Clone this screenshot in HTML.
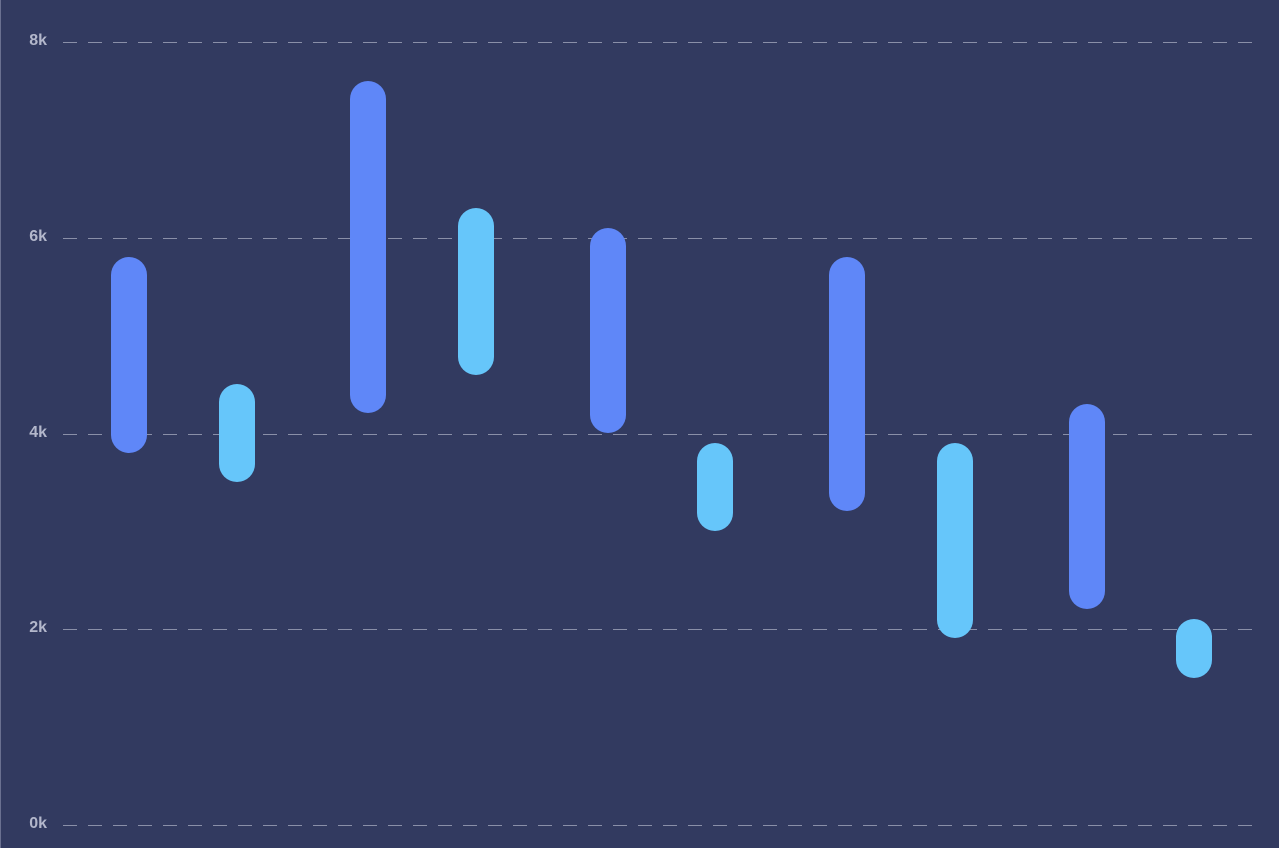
<!DOCTYPE html>
<html><head><style>
html,body{margin:0;padding:0;}
body{width:1279px;height:848px;background:#323a60;position:relative;overflow:hidden;font-family:"Liberation Sans",sans-serif;}
.lb{position:absolute;left:0;top:0;width:1px;height:848px;background:#6a7090;}
.t{position:absolute;right:1232px;color:#b3b7cb;font-size:16px;font-weight:bold;line-height:16px;}
.g{position:absolute;left:63px;width:1192px;height:1px;background:repeating-linear-gradient(90deg,#8a8fa8 0 14px,transparent 14px 25px);}
.b{position:absolute;width:36px;border-radius:18px;}
.d{background:#5f87f8}.l{background:#66c6fa}
</style></head><body>
<div class="lb"></div>
<div class="t" style="top:33px">8k</div><div class="g" style="top:42px"></div>
<div class="t" style="top:229px">6k</div><div class="g" style="top:238px"></div>
<div class="t" style="top:425px">4k</div><div class="g" style="top:434px"></div>
<div class="t" style="top:620px">2k</div><div class="g" style="top:629px"></div>
<div class="t" style="top:816px">0k</div><div class="g" style="top:825px"></div>
<div class="b d" style="left:111px;top:257px;height:196px"></div>
<div class="b l" style="left:219px;top:384px;height:98px"></div>
<div class="b d" style="left:350px;top:81px;height:332px"></div>
<div class="b l" style="left:458px;top:208px;height:167px"></div>
<div class="b d" style="left:590px;top:228px;height:205px"></div>
<div class="b l" style="left:697px;top:443px;height:88px"></div>
<div class="b d" style="left:829px;top:257px;height:254px"></div>
<div class="b l" style="left:937px;top:443px;height:195px"></div>
<div class="b d" style="left:1069px;top:404px;height:205px"></div>
<div class="b l" style="left:1176px;top:619px;height:59px"></div>
</body></html>
